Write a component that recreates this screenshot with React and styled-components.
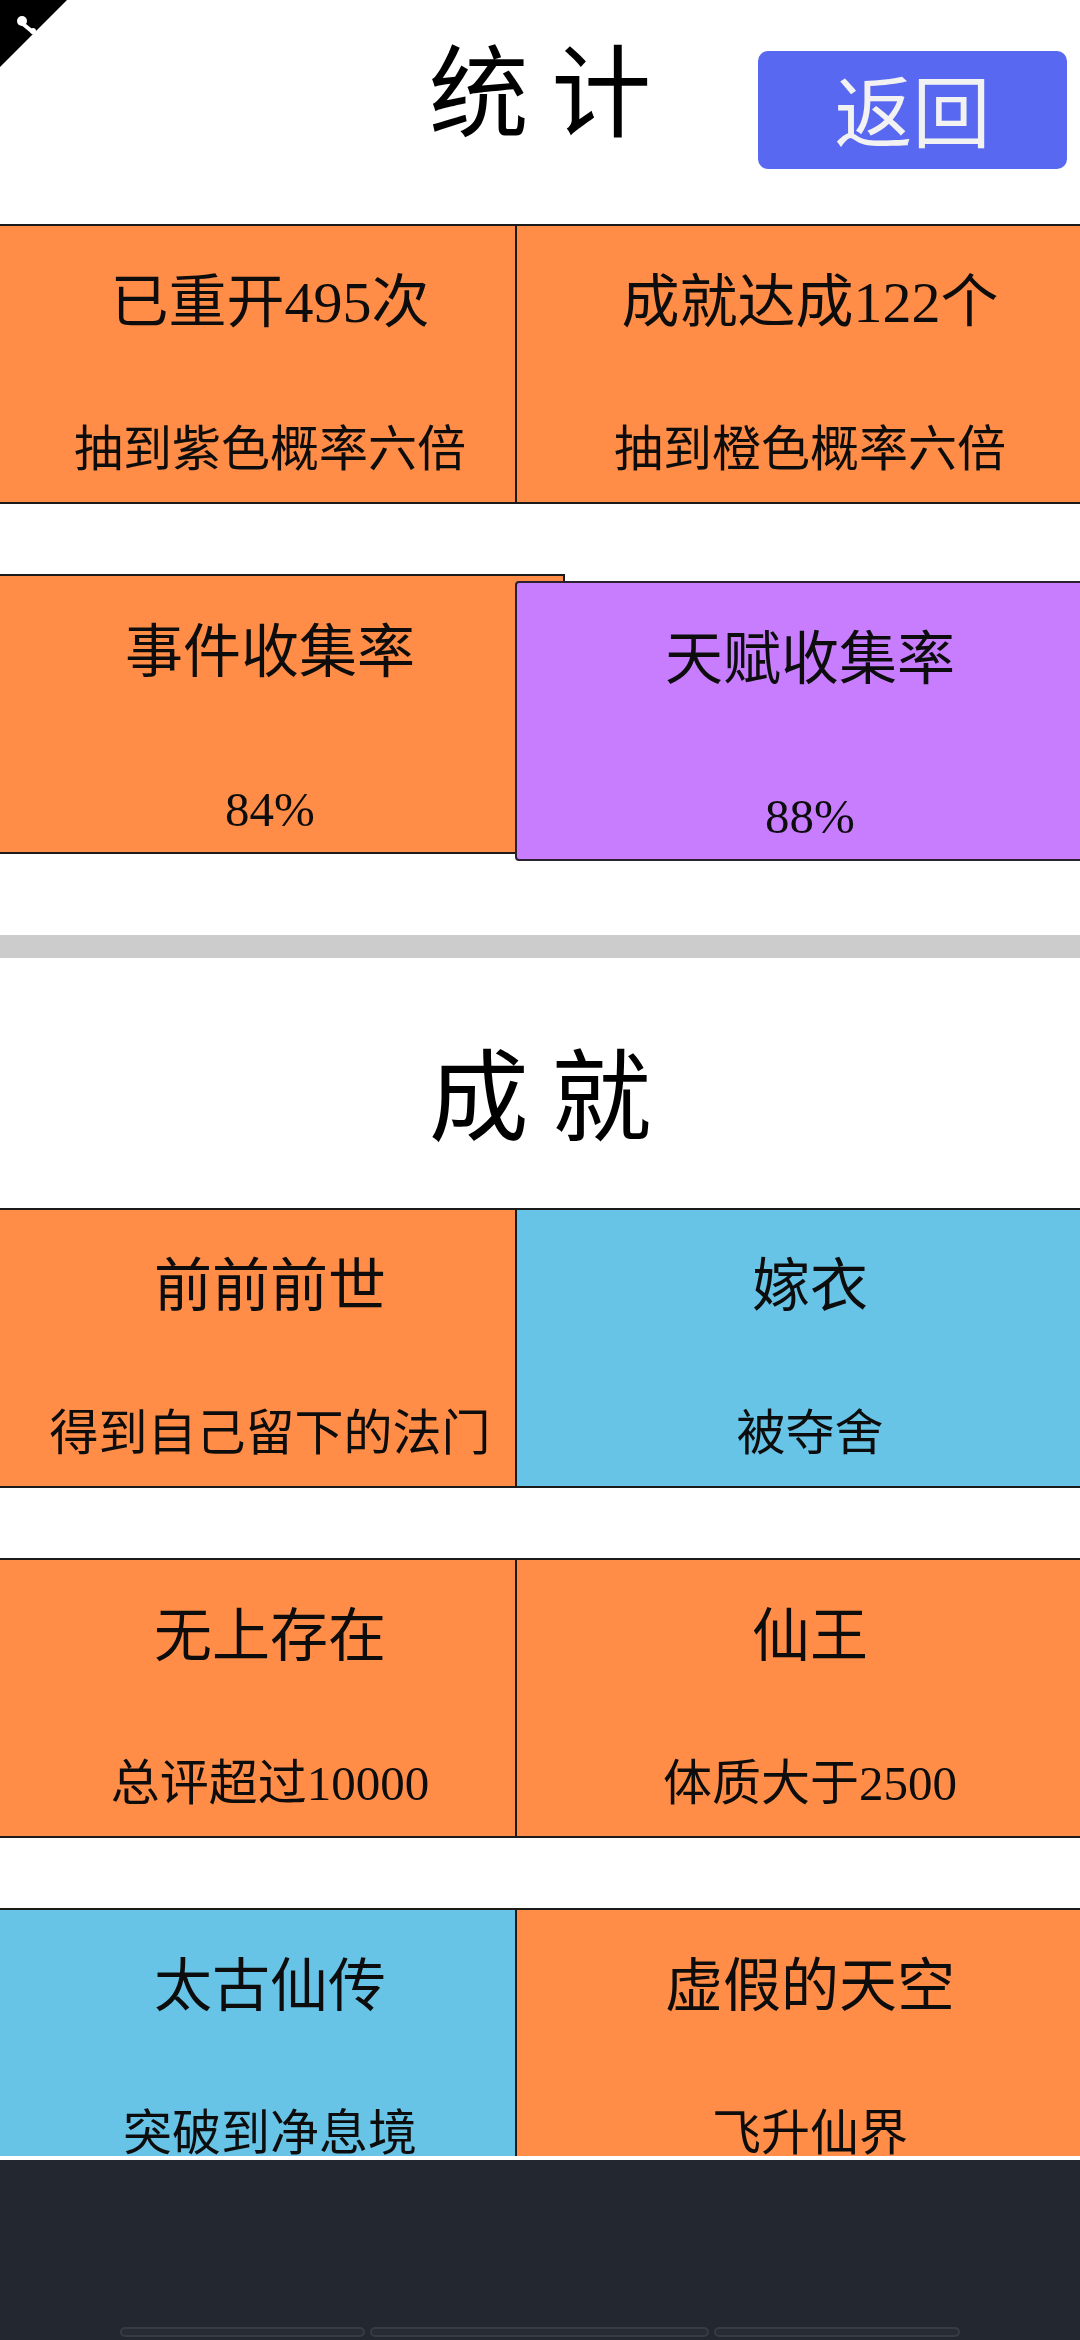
import React from 'react';
import styled, { createGlobalStyle } from 'styled-components';

const GlobalStyle = createGlobalStyle`
  html, body { margin: 0; padding: 0; background: #ffffff; }
  body { overflow-x: hidden; font-family: "Noto Sans CJK SC", "Noto Sans", sans-serif; }
  * { box-sizing: border-box; }
`;

const Page = styled.div`
  width: 1080px;
  overflow: hidden;
  background: #ffffff;
  position: relative;
`;

const Corner = styled.svg`
  position: absolute;
  left: 0;
  top: 0;
  width: 68px;
  height: 68px;
  z-index: 5;
`;

const Header = styled.header`
  height: 224px;
  display: grid;
  grid-template-columns: 1fr auto 1fr;
  align-items: start;
`;

const PageTitle = styled.h1`
  grid-column: 2;
  margin: 0;
  padding-top: ${p => p.$top}px;
  font-family: "Noto Sans CJK SC", sans-serif;
  font-size: 100px;
  font-weight: 400;
  line-height: 100px;
  color: #000;
  white-space: pre;
`;

const BackButton = styled.button`
  grid-column: 3;
  justify-self: end;
  margin: 51px 13px 0 0;
  width: 309px;
  height: 118px;
  border: none;
  border-radius: 10px;
  background: #5868f0;
  color: #f2f2f2;
  font-family: "Noto Sans CJK SC", sans-serif;
  font-size: 78px;
  line-height: 1;
  padding: 0 0 4px;
  cursor: pointer;
`;

const CardGrid = styled.div`
  display: grid;
  grid-template-columns: 1fr 1fr;
  row-gap: 70px;
`;

const Card = styled.div`
  position: relative;
  margin: ${p => (p.$drop ? '7px' : '0')} -25px 0;
  height: 280px;
  background: ${p => p.$color};
  border: 2px solid ${p => p.$edge || '#1b1b1b'};
  border-radius: ${p => (p.$drop ? '4px' : '0')};
  display: flex;
  flex-direction: column;
  align-items: center;
  color: #0d0d0d;
  font-family: "Liberation Serif", "Noto Sans CJK SC", serif;
`;

const CardTitle = styled.div`
  margin-top: 48px;
  font-size: 58px;
  line-height: 58px;
  white-space: nowrap;
`;

const CardSub = styled.div`
  margin-top: ${p => (p.$numeric ? 103 : 93)}px;
  font-size: 49px;
  line-height: 49px;
  white-space: nowrap;
`;

const Divider = styled.div`
  margin-top: ${p => p.$top}px;
  height: 23px;
  background: #cccccc;
`;

const SectionHead = styled.div`
  height: 250px;
  display: flex;
  justify-content: center;
`;

const BottomBar = styled.div`
  position: fixed;
  left: 0;
  right: 0;
  bottom: 0;
  height: 184px;
  border-top: 4px solid #ffffff;
  background: #222730;
  display: flex;
  align-items: flex-end;
  gap: 5px;
  padding: 0 0 3px 120px;
  z-index: 10;
`;

const NavSlot = styled.div`
  width: ${p => p.$w}px;
  height: 10px;
  border: 2px solid #363b45;
  border-radius: 6px;
  background: #262b34;
`;

const COLORS = {
  orange: '#ff8c47',
  blue: '#68c4e6',
  purple: '#c87dff',
};

const stats = [
  { title: '已重开495次', sub: '抽到紫色概率六倍', color: 'orange' },
  { title: '成就达成122个', sub: '抽到橙色概率六倍', color: 'orange' },
  { title: '事件收集率', sub: '84%', color: 'orange', numeric: true },
  { title: '天赋收集率', sub: '88%', color: 'purple', drop: true, numeric: true },
];

const achievements = [
  { title: '前前前世', sub: '得到自己留下的法门', color: 'orange' },
  { title: '嫁衣', sub: '被夺舍', color: 'blue' },
  { title: '无上存在', sub: '总评超过10000', color: 'orange' },
  { title: '仙王', sub: '体质大于2500', color: 'orange' },
  { title: '太古仙传', sub: '突破到净息境', color: 'blue' },
  { title: '虚假的天空', sub: '飞升仙界', color: 'orange' },
];

function Tile({ item }) {
  return (
    <Card
      $color={COLORS[item.color]}
      $drop={item.drop}
      $edge={item.drop ? '#2a2230' : undefined}
    >
      <CardTitle>{item.title}</CardTitle>
      <CardSub $numeric={item.numeric}>{item.sub}</CardSub>
    </Card>
  );
}

export default function App() {
  return (
    <Page>
      <GlobalStyle />
      <Corner viewBox="0 0 68 68">
        <polygon points="0,0 67,0 0,67" fill="#000" />
        <circle cx="22" cy="21" r="5" fill="#fff" />
        <path d="M23 24 L34 33" stroke="#fff" strokeWidth="4" strokeLinecap="round" />
        <circle cx="33" cy="31" r="3" fill="#fff" />
      </Corner>
      <Header>
        <PageTitle $top={36}>{'统 计'}</PageTitle>
        <BackButton>返回</BackButton>
      </Header>
      <CardGrid>
        {stats.map((s, i) => (
          <Tile key={i} item={s} />
        ))}
      </CardGrid>
      <Divider $top={74} />
      <SectionHead>
        <PageTitle $top={82}>{'成 就'}</PageTitle>
      </SectionHead>
      <CardGrid>
        {achievements.map((a, i) => (
          <Tile key={i} item={a} />
        ))}
      </CardGrid>
      <BottomBar>
        <NavSlot $w={245} />
        <NavSlot $w={339} />
        <NavSlot $w={246} />
      </BottomBar>
    </Page>
  );
}
